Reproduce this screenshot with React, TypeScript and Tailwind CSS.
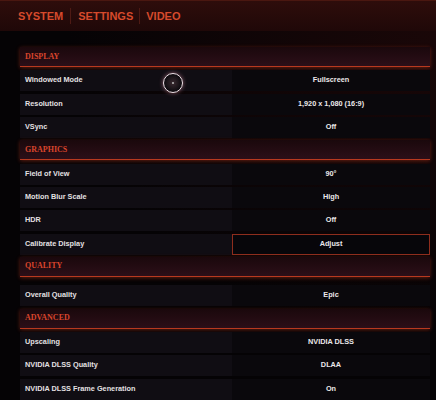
import React from "react";

type Item =
  | { kind: "section"; title: string; gapAfter?: boolean }
  | { kind: "row"; label: string; value: string; boxed?: boolean };

const items: Item[] = [
  { kind: "section", title: "Display" },
  { kind: "row", label: "Windowed Mode", value: "Fullscreen" },
  { kind: "row", label: "Resolution", value: "1,920 x 1,080 (16:9)" },
  { kind: "row", label: "VSync", value: "Off" },
  { kind: "section", title: "Graphics" },
  { kind: "row", label: "Field of View", value: "90°" },
  { kind: "row", label: "Motion Blur Scale", value: "High" },
  { kind: "row", label: "HDR", value: "Off" },
  { kind: "row", label: "Calibrate Display", value: "Adjust", boxed: true },
  { kind: "section", title: "Quality", gapAfter: true },
  { kind: "row", label: "Overall Quality", value: "Epic" },
  { kind: "section", title: "Advanced" },
  { kind: "row", label: "Upscaling", value: "NVIDIA DLSS" },
  { kind: "row", label: "NVIDIA DLSS Quality", value: "DLAA" },
  { kind: "row", label: "NVIDIA DLSS Frame Generation", value: "On" },
];

function SectionHeader({ title, gapAfter }: { title: string; gapAfter?: boolean }) {
  return (
    <div className={gapAfter ? "h-[28.5px]" : "h-[23.33px]"}>
      <div className="h-[20px] flex items-center px-[5px] bg-[linear-gradient(to_bottom,#1a080c,#2c0f18)] border-b border-[#b8391f] shadow-[0_1px_4px_rgba(200,60,30,0.45)]">
        <span className="text-[8px] font-bold uppercase text-[#d9452c] [font-family:'Liberation_Serif',serif]">
          {title}
        </span>
      </div>
    </div>
  );
}

function Row({ label, value, boxed }: { label: string; value: string; boxed?: boolean }) {
  return (
    <div className="h-[23.33px]">
      <div className="h-[21px] flex bg-[#100d13]">
        <div className="w-[212px] flex items-center pl-[5px] text-[7.3px] font-bold text-[#e4e0e2]">
          {label}
        </div>
        <div
          className={
            boxed
              ? "flex-1 flex items-center justify-center bg-[#07060a] border border-[#8e2d1d] text-[7.3px] font-bold text-[#ece8ea]"
              : "flex-1 flex items-center justify-center bg-[#0a080c] text-[7.3px] font-bold text-[#ece8ea]"
          }
        >
          {value}
        </div>
      </div>
    </div>
  );
}

export default function App() {
  return (
    <div className="w-[436px] h-[400px] overflow-hidden relative bg-[#050305] [font-family:'Liberation_Sans',Arial,sans-serif]">
      {/* top tab bar */}
      <div className="h-[31px] flex items-center pl-[18px] bg-[linear-gradient(to_bottom,#2e0d0b,#1f0808)] border-t border-[#4a1710]">
        <span className="text-[11px] font-bold text-[#d64a2c]">SYSTEM</span>
        <span className="w-px h-[16px] bg-[#4e1a14] mx-[7px]"></span>
        <span className="text-[11px] font-bold text-[#d64a2c]">SETTINGS</span>
        <span className="w-px h-[16px] bg-[#4e1a14] mx-[6px]"></span>
        <span className="text-[11px] font-bold text-[#d64a2c]">VIDEO</span>
      </div>

      {/* settings list */}
      <div className="pt-[16px] pl-[20px] pr-[6px] bg-[radial-gradient(ellipse_at_top_right,#1a0708,#050305_60%)]">
        {items.map((it, i) =>
          it.kind === "section" ? (
            <SectionHeader key={i} title={it.title} gapAfter={it.gapAfter} />
          ) : (
            <Row key={i} label={it.label} value={it.value} boxed={it.boxed} />
          )
        )}
      </div>

      {/* mouse cursor */}
      <div className="absolute left-[163px] top-[73px] w-[20px] h-[20px] rounded-full border-[1.5px] border-[#f2e4ea] bg-[radial-gradient(circle,#3a2a30,#0c0a0e_70%)] shadow-[0_0_4px_rgba(230,150,170,0.6)] flex items-center justify-center">
        <div className="w-[2px] h-[2px] rounded-full bg-[#bbb]"></div>
      </div>
    </div>
  );
}
